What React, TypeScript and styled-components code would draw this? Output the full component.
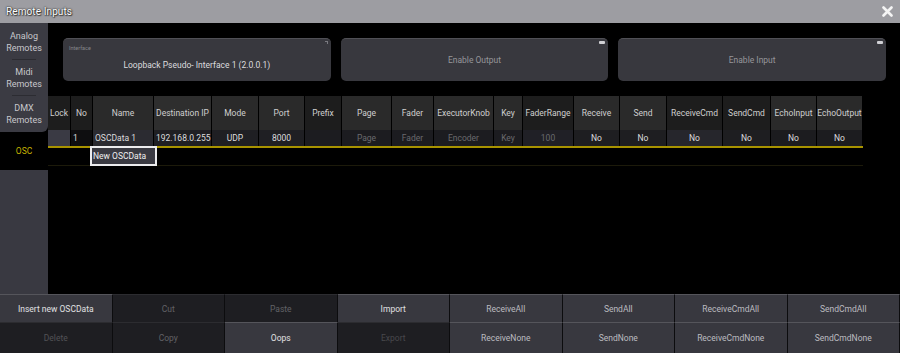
import React from "react";
import styled, { createGlobalStyle } from "styled-components";

const GlobalStyle = createGlobalStyle`
  html, body { margin: 0; padding: 0; background: #000; }
  body { font-family: Roboto, "Liberation Sans", sans-serif; }
  * { box-sizing: border-box; }
`;

const Window = styled.div`
  width: 900px;
  height: 353px;
  background: #000;
  display: flex;
  flex-direction: column;
  overflow: hidden;
`;

const TitleBar = styled.div`
  height: 23px;
  flex: none;
  background: #9d9da2;
  display: flex;
  align-items: center;
  justify-content: space-between;
  padding: 0 7px 0 6px;
`;

const Title = styled.span`
  color: #fff;
  font-size: 10px;
  letter-spacing: 0.1px;
  text-shadow: 0 0 1px #222, 0 0 2px #333, 1px 1px 1px #444;
`;

const Body = styled.div`
  flex: 1;
  display: flex;
  min-height: 0;
`;

const Sidebar = styled.div`
  width: 48px;
  flex: none;
  display: flex;
  flex-direction: column;
`;

const TabGroup = styled.div`
  background: #3b3b43;
  border-bottom-right-radius: 6px;
  padding-top: 1px;
`;

const Tab = styled.div<{ $sep?: boolean }>`
  height: 36px;
  display: flex;
  align-items: center;
  justify-content: center;
  text-align: center;
  color: #c8c8cc;
  font-size: 9px;
  line-height: 12px;
  position: relative;
  &::after {
    content: "";
    display: ${(p) => (p.$sep ? "block" : "none")};
    position: absolute;
    left: 12px;
    right: 12px;
    bottom: 0;
    height: 1px;
    background: #2c2c32;
  }
`;

const ActiveTab = styled.div`
  height: 38px;
  display: flex;
  align-items: center;
  justify-content: center;
  color: #c8b400;
  font-size: 8.5px;
  background: #000;
`;

const SidebarFill = styled.div`
  flex: 1;
  background: #393941;
`;

const Main = styled.div`
  flex: 1;
  display: flex;
  flex-direction: column;
  min-width: 0;
`;

const TopButtons = styled.div`
  display: grid;
  grid-template-columns: repeat(3, 1fr);
  gap: 10px;
  padding: 15px 14px 15px 15px;
`;

const BigButton = styled.div`
  height: 43px;
  background: #38383e;
  border-top: 1px solid #505056;
  border-radius: 5px;
  position: relative;
  display: flex;
  align-items: center;
  justify-content: center;
  color: #96969a;
  font-size: 8.5px;
`;

const Indicator = styled.span`
  position: absolute;
  top: 2px;
  right: 3px;
  width: 6px;
  height: 3px;
  border-radius: 1px;
  background: #d0d0d4;
`;

const Corner = styled.span`
  position: absolute;
  top: 2px;
  right: 3px;
  width: 3px;
  height: 3px;
  border-top: 1px solid #7a7a80;
  border-right: 1px solid #7a7a80;
`;

const FieldLabel = styled.span`
  position: absolute;
  top: 6px;
  left: 6px;
  font-size: 5.5px;
  color: #85858a;
`;

const FieldValue = styled.span`
  color: #dcdcde;
  font-size: 8.5px;
  margin-top: 10px;
`;

const Table = styled.div`
  display: flex;
  flex-direction: column;
  width: 815px;
`;

const GridRow = styled.div<{ $cols: string; $h: number }>`
  display: grid;
  grid-template-columns: ${(p) => p.$cols};
  height: ${(p) => p.$h}px;
`;

const HeadCell = styled.div<{ $tone: "light" | "dark" | "mid" }>`
  background: ${(p) =>
    p.$tone === "light" ? "#2a2a2a" : p.$tone === "mid" ? "#2e2e2e" : "#1d1d1d"};
  border-right: 1px solid #000;
  color: #cfcfcf;
  font-size: 8.5px;
  display: flex;
  align-items: center;
  justify-content: center;
  white-space: nowrap;
  overflow: hidden;
`;

const DataCell = styled.div<{ $bg: string; $dim?: boolean; $left?: boolean }>`
  background: ${(p) => p.$bg};
  border-right: 1px solid #000;
  color: ${(p) => (p.$dim ? "#6a6a6e" : "#dcdcde")};
  font-size: 8.5px;
  display: flex;
  align-items: center;
  justify-content: ${(p) => (p.$left ? "flex-start" : "center")};
  padding-left: ${(p) => (p.$left ? "2px" : "0")};
  white-space: nowrap;
  overflow: hidden;
`;

const YellowLine = styled.div`
  height: 2px;
  background: #a89300;
`;

const NewRow = styled.div`
  height: 18px;
  border-bottom: 1px solid #1c1a0a;
  padding-left: 42px;
  display: flex;
`;

const NewInput = styled.div`
  width: 67px;
  height: 20px;
  margin-top: -2px;
  border: 2px solid #ececee;
  background: #3a3a42;
  color: #f0f0f0;
  font-size: 8.5px;
  display: flex;
  align-items: center;
  padding-left: 1px;
`;

const BottomBar = styled.div`
  height: 59px;
  flex: none;
  display: grid;
  grid-template-columns: repeat(8, 1fr);
  grid-template-rows: 28px 31px;
`;

type Tone = "lit" | "dark";

const BarButton = styled.div<{ $tone: Tone; $text: string }>`
  background: ${(p) => (p.$tone === "dark" ? "#1e1e22" : "#38383f")};
  border-top: 1px solid ${(p) => (p.$tone === "dark" ? "#2c2c30" : "#55555b")};
  border-right: 1px solid #0c0c0e;
  color: ${(p) => p.$text};
  font-size: 8.5px;
  display: flex;
  align-items: center;
  justify-content: center;
  white-space: nowrap;
`;

const cols = [
  { label: "Lock", w: 23, tone: "dark", bg: "#3a3a44", v: "", left: true },
  { label: "No", w: 22, tone: "dark", bg: "#0e0e10", v: "1", left: true },
  { label: "Name", w: 61, tone: "light", bg: "#2b2b31", v: "OSCData 1", left: true },
  { label: "Destination IP", w: 58, tone: "mid", bg: "#1f1f23", v: "192.168.0.255", left: true },
  { label: "Mode", w: 47, tone: "light", bg: "#1f1f23", v: "UDP" },
  { label: "Port", w: 46, tone: "light", bg: "#1f1f23", v: "8000" },
  { label: "Prefix", w: 37, tone: "dark", bg: "#1c1c20", v: "" },
  { label: "Page", w: 50, tone: "light", bg: "#1c1c20", v: "Page", dim: true },
  { label: "Fader", w: 42, tone: "light", bg: "#1c1c20", v: "Fader", dim: true },
  { label: "ExecutorKnob", w: 60, tone: "light", bg: "#1c1c20", v: "Encoder", dim: true },
  { label: "Key", w: 29, tone: "light", bg: "#1c1c20", v: "Key", dim: true },
  { label: "FaderRange", w: 51, tone: "dark", bg: "#202026", v: "100", dim: true },
  { label: "Receive", w: 46, tone: "light", bg: "#1e1e21", v: "No" },
  { label: "Send", w: 47, tone: "light", bg: "#1e1e21", v: "No" },
  { label: "ReceiveCmd", w: 56, tone: "dark", bg: "#26262c", v: "No" },
  { label: "SendCmd", w: 48, tone: "dark", bg: "#1e1e21", v: "No" },
  { label: "EchoInput", w: 46, tone: "light", bg: "#1c1c1f", v: "No" },
  { label: "EchoOutput", w: 46, tone: "light", bg: "#1c1c1f", v: "No" },
] as const;

const template = cols.map((c) => `${c.w}px`).join(" ");

const bottom: { t: string; tone: Tone; c: string }[] = [
  { t: "Insert new OSCData", tone: "lit", c: "#e0e0e2" },
  { t: "Cut", tone: "dark", c: "#626266" },
  { t: "Paste", tone: "dark", c: "#626266" },
  { t: "Import", tone: "lit", c: "#e0e0e2" },
  { t: "ReceiveAll", tone: "lit", c: "#bcbcc0" },
  { t: "SendAll", tone: "lit", c: "#bcbcc0" },
  { t: "ReceiveCmdAll", tone: "lit", c: "#bcbcc0" },
  { t: "SendCmdAll", tone: "lit", c: "#bcbcc0" },
  { t: "Delete", tone: "dark", c: "#525256" },
  { t: "Copy", tone: "dark", c: "#626266" },
  { t: "Oops", tone: "lit", c: "#e0e0e2" },
  { t: "Export", tone: "dark", c: "#48484c" },
  { t: "ReceiveNone", tone: "lit", c: "#bcbcc0" },
  { t: "SendNone", tone: "lit", c: "#bcbcc0" },
  { t: "ReceiveCmdNone", tone: "lit", c: "#bcbcc0" },
  { t: "SendCmdNone", tone: "lit", c: "#bcbcc0" },
];

const CloseIcon = () => (
  <svg width="11" height="11" viewBox="0 0 11 11">
    <path d="M1.5 1.5 L9.5 9.5 M9.5 1.5 L1.5 9.5" stroke="#f4f4f4" strokeWidth="2.6" strokeLinecap="round" />
  </svg>
);

export default function App() {
  return (
    <Window>
      <GlobalStyle />
      <TitleBar>
        <Title>Remote Inputs</Title>
        <CloseIcon />
      </TitleBar>
      <Body>
        <Sidebar>
          <TabGroup>
            <Tab $sep>
              Analog
              <br />
              Remotes
            </Tab>
            <Tab $sep>
              Midi
              <br />
              Remotes
            </Tab>
            <Tab>
              DMX
              <br />
              Remotes
            </Tab>
          </TabGroup>
          <ActiveTab>OSC</ActiveTab>
          <SidebarFill />
        </Sidebar>
        <Main>
          <TopButtons>
            <BigButton>
              <FieldLabel>Interface</FieldLabel>
              <Corner />
              <FieldValue>Loopback Pseudo- Interface 1 (2.0.0.1)</FieldValue>
            </BigButton>
            <BigButton>
              <Indicator />
              Enable Output
            </BigButton>
            <BigButton>
              <Indicator />
              Enable Input
            </BigButton>
          </TopButtons>
          <Table>
            <GridRow $cols={template} $h={34}>
              {cols.map((c) => (
                <HeadCell key={c.label} $tone={c.tone}>
                  {c.label}
                </HeadCell>
              ))}
            </GridRow>
            <GridRow $cols={template} $h={16}>
              {cols.map((c) => (
                <DataCell
                  key={c.label}
                  $bg={c.bg}
                  $dim={"dim" in c ? c.dim : false}
                  $left={"left" in c ? c.left : false}
                >
                  {c.v}
                </DataCell>
              ))}
            </GridRow>
            <YellowLine />
            <NewRow>
              <NewInput>New OSCData</NewInput>
            </NewRow>
          </Table>
        </Main>
      </Body>
      <BottomBar>
        {bottom.map((b) => (
          <BarButton key={b.t} $tone={b.tone} $text={b.c}>
            {b.t}
          </BarButton>
        ))}
      </BottomBar>
    </Window>
  );
}
